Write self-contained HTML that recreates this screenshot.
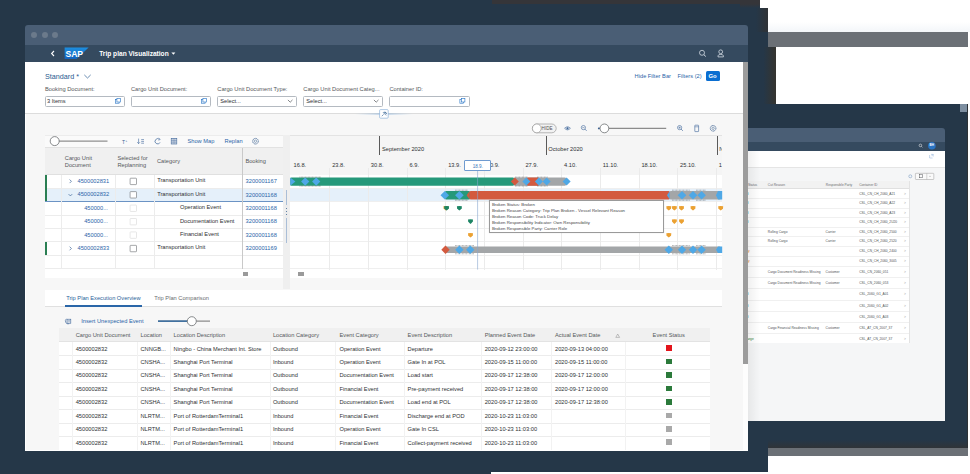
<!DOCTYPE html><html><head><meta charset="utf-8"><style>
html,body{margin:0;padding:0;}
body{width:970px;height:474px;overflow:hidden;position:relative;background:#253748;font-family:"Liberation Sans",sans-serif;}
div{position:absolute;box-sizing:border-box;}
.t{white-space:nowrap;font-size:5.7px;line-height:7px;color:#2e3134;}
.l{white-space:nowrap;font-size:5.7px;line-height:7px;color:#2a64a8;}
.h{white-space:nowrap;font-size:5.7px;line-height:7px;color:#55585b;}
svg{position:absolute;overflow:visible;}
</style></head><body>
<div style="left:760px;top:0px;width:210px;height:32px;background:#ffffff"></div>
<div style="left:760px;top:22px;width:210px;height:10px;background:linear-gradient(#fff,#f3f6f9)"></div>
<div style="left:492px;top:0px;width:268px;height:3.8px;background:#353539"></div>
<div style="left:740px;top:3.8px;width:20px;height:4px;background:linear-gradient(#353539,#253748)"></div>
<div style="left:756px;top:8px;width:12px;height:24px;background:linear-gradient(90deg,#253748,#2f3236)"></div>
<div style="left:768px;top:32px;width:200px;height:16px;background:#6b7076"></div>
<div style="left:968px;top:32px;width:2px;height:16px;background:#fff"></div>
<div style="left:758px;top:47px;width:18px;height:57px;background:linear-gradient(90deg,#253748 30%,#35342f)"></div>
<div style="left:776px;top:47px;width:194px;height:57px;background:#ffffff"></div>
<div style="left:960px;top:104px;width:8px;height:8px;background:#7d8ea0"></div>
<div style="left:968px;top:104px;width:2px;height:370px;background:#ffffff"></div>
<div style="left:768px;top:440px;width:200px;height:8px;background:linear-gradient(#253748,#303438)"></div>
<div style="left:967px;top:104px;width:1px;height:344px;background:#2d3236"></div>
<div style="left:768px;top:448px;width:200px;height:8px;background:#6b7076"></div>
<div style="left:768px;top:456px;width:202px;height:18px;background:#ffffff"></div>
<div style="left:491px;top:472px;width:277px;height:2px;background:#ffffff"></div>
<div style="left:700px;top:128px;width:245px;height:14px;background:#4a5e75;border-radius:3px 3px 0 0"></div>
<div style="left:700px;top:141.5px;width:245px;height:10px;background:#354a5f"></div>
<div style="left:700px;top:151px;width:245px;height:270px;background:#f5f6f7"></div>
<div style="left:700px;top:151px;width:245px;height:17px;background:#ffffff;border-bottom:1px solid #e5e5e5"></div>

<svg style="left:0;top:0" width="970" height="474"><circle cx="920.4" cy="145.4" r="1.3" fill="none" stroke="#fff" stroke-width="0.5"/><line x1="921.4" y1="146.4" x2="922.4" y2="147.4" stroke="#fff" stroke-width="0.5"/><circle cx="931.9" cy="145.7" r="3.8" fill="#2a74c4"/><path d="M929.6,155 V158 H932.6 M931,154.4 H933.2 V156.6 M931.4,156.2 L933.2,154.4" fill="none" stroke="#6f9bd0" stroke-width="0.4"/><circle cx="910.3" cy="176.3" r="1.5" fill="none" stroke="#6a8fb8" stroke-width="0.5"/><rect x="915.4" y="173.3" width="18.4" height="6.2" rx="0.6" fill="#fafafa" stroke="#9a9a9a" stroke-width="0.5"/><line x1="926.8" y1="173.3" x2="926.8" y2="179.5" stroke="#9a9a9a" stroke-width="0.4"/><line x1="929" y1="176.4" x2="931" y2="176.4" stroke="#777" stroke-width="0.3"/><rect x="919.6" y="174.6" width="3" height="3.2" fill="none" stroke="#32363a" stroke-width="0.4"/></svg>
<div class="t" style="left:929.5px;top:144.2px;font-size:3.1px;line-height:3.1px;color:#fff;font-weight:bold">BH</div>
<div style="left:745px;top:181.1px;width:164.5px;height:7.9px;background:#f2f2f2;border-bottom:0.4px solid #e0e0e0"></div>
<div style="left:909.2px;top:181.1px;width:0.4px;height:162px;background:#e3e3e3"></div>
<div class="t" style="left:748px;top:183.2px;font-size:3.25px;line-height:4px;color:#6a6d70">Status</div>
<div class="t" style="left:767.8px;top:183.2px;font-size:3.25px;line-height:4px;color:#6a6d70">Cut Reason</div>
<div class="t" style="left:825.8px;top:183.2px;font-size:3.25px;line-height:4px;color:#6a6d70">Responsible Party</div>
<div class="t" style="left:859.2px;top:183.2px;font-size:3.25px;line-height:4px;color:#6a6d70">Container ID</div>
<div style="left:745px;top:189px;width:164px;height:154.3px;background:#fff"></div>
<div style="left:745px;top:198.35000000000002px;width:164px;height:0.4px;background:#f0f0f0"></div>
<div style="left:745px;top:207.85000000000002px;width:164px;height:0.4px;background:#f0f0f0"></div>
<div style="left:745px;top:217.35000000000002px;width:164px;height:0.4px;background:#f0f0f0"></div>
<div style="left:745px;top:226.85000000000002px;width:164px;height:0.4px;background:#f0f0f0"></div>
<div style="left:745px;top:236.35000000000002px;width:164px;height:0.4px;background:#f0f0f0"></div>
<div style="left:745px;top:246.0px;width:164px;height:0.4px;background:#f0f0f0"></div>
<div style="left:745px;top:255.8px;width:164px;height:0.4px;background:#f0f0f0"></div>
<div style="left:745px;top:266.05px;width:164px;height:0.4px;background:#f0f0f0"></div>
<div style="left:745px;top:277.1px;width:164px;height:0.4px;background:#f0f0f0"></div>
<div style="left:745px;top:288.45px;width:164px;height:0.4px;background:#f0f0f0"></div>
<div style="left:745px;top:299.8px;width:164px;height:0.4px;background:#f0f0f0"></div>
<div style="left:745px;top:311.09999999999997px;width:164px;height:0.4px;background:#f0f0f0"></div>
<div style="left:745px;top:322.34999999999997px;width:164px;height:0.4px;background:#f0f0f0"></div>
<div style="left:745px;top:333.25px;width:164px;height:0.4px;background:#f0f0f0"></div>
<div class="t" style="left:859.2px;top:191.8px;font-size:3.25px;line-height:4px;color:#505356">CSL_CN_CH_2060_A21</div>
<div class="t" style="left:904px;top:191.8px;font-size:3.25px;line-height:4px;color:#999">&gt;</div>
<div class="t" style="left:746.6px;top:191.8px;font-size:3.25px;line-height:4px;color:#2b7d2b">d</div>
<div class="t" style="left:859.2px;top:201.3px;font-size:3.25px;line-height:4px;color:#505356">CSL_CN_CH_2060_A22</div>
<div class="t" style="left:904px;top:201.3px;font-size:3.25px;line-height:4px;color:#999">&gt;</div>
<div class="t" style="left:746.6px;top:201.3px;font-size:3.25px;line-height:4px;color:#2b7d2b">d</div>
<div class="t" style="left:859.2px;top:210.8px;font-size:3.25px;line-height:4px;color:#505356">CSL_CN_CH_2060_A23</div>
<div class="t" style="left:904px;top:210.8px;font-size:3.25px;line-height:4px;color:#999">&gt;</div>
<div class="t" style="left:746.6px;top:210.8px;font-size:3.25px;line-height:4px;color:#2b7d2b">d</div>
<div class="t" style="left:859.2px;top:220.3px;font-size:3.25px;line-height:4px;color:#505356">CSL_CN_CH_2060_2U20</div>
<div class="t" style="left:904px;top:220.3px;font-size:3.25px;line-height:4px;color:#999">&gt;</div>
<div class="t" style="left:746.6px;top:220.3px;font-size:3.25px;line-height:4px;color:#2b7d2b">d</div>
<div class="t" style="left:859.2px;top:229.8px;font-size:3.25px;line-height:4px;color:#505356">CSL_CN_CH_2060_2500</div>
<div class="t" style="left:904px;top:229.8px;font-size:3.25px;line-height:4px;color:#999">&gt;</div>
<div class="t" style="left:767.8px;top:229.8px;font-size:3.25px;line-height:4px;color:#505356">Rolling Cargo</div>
<div class="t" style="left:825.6px;top:229.8px;font-size:3.25px;line-height:4px;color:#505356">Carrier</div>
<div class="t" style="left:859.2px;top:239.3px;font-size:3.25px;line-height:4px;color:#505356">CSL_CN_CH_2060_2520</div>
<div class="t" style="left:904px;top:239.3px;font-size:3.25px;line-height:4px;color:#999">&gt;</div>
<div class="t" style="left:767.8px;top:239.3px;font-size:3.25px;line-height:4px;color:#505356">Rolling Cargo</div>
<div class="t" style="left:825.6px;top:239.3px;font-size:3.25px;line-height:4px;color:#505356">Carrier</div>
<div class="t" style="left:859.2px;top:249.1px;font-size:3.25px;line-height:4px;color:#505356">CSL_CN_CH_2060_2400</div>
<div class="t" style="left:904px;top:249.1px;font-size:3.25px;line-height:4px;color:#999">&gt;</div>
<div class="t" style="left:745.4px;top:249.1px;font-size:3.25px;line-height:4px;color:#e07b1a">tify</div>
<div class="t" style="left:859.2px;top:258.9px;font-size:3.25px;line-height:4px;color:#505356">CSL_CN_CH_2060_3005</div>
<div class="t" style="left:904px;top:258.9px;font-size:3.25px;line-height:4px;color:#999">&gt;</div>
<div class="t" style="left:745.4px;top:258.9px;font-size:3.25px;line-height:4px;color:#e07b1a">tify</div>
<div class="t" style="left:859.2px;top:269.6px;font-size:3.25px;line-height:4px;color:#505356">CSL_CN_2060_051</div>
<div class="t" style="left:904px;top:269.6px;font-size:3.25px;line-height:4px;color:#999">&gt;</div>
<div class="t" style="left:767.8px;top:269.6px;font-size:3.25px;line-height:4px;color:#505356">Cargo Document Readiness Missing</div>
<div class="t" style="left:825.6px;top:269.6px;font-size:3.25px;line-height:4px;color:#505356">Customer</div>
<div class="t" style="left:859.2px;top:281px;font-size:3.25px;line-height:4px;color:#505356">CSL_CN_2060_053</div>
<div class="t" style="left:904px;top:281px;font-size:3.25px;line-height:4px;color:#999">&gt;</div>
<div class="t" style="left:767.8px;top:281px;font-size:3.25px;line-height:4px;color:#505356">Cargo Document Readiness Missing</div>
<div class="t" style="left:825.6px;top:281px;font-size:3.25px;line-height:4px;color:#505356">Customer</div>
<div class="t" style="left:859.2px;top:292.3px;font-size:3.25px;line-height:4px;color:#505356">CSL_2060_G1_A01</div>
<div class="t" style="left:904px;top:292.3px;font-size:3.25px;line-height:4px;color:#999">&gt;</div>
<div class="t" style="left:746.6px;top:292.3px;font-size:3.25px;line-height:4px;color:#2b7d2b">d</div>
<div class="t" style="left:859.2px;top:303.7px;font-size:3.25px;line-height:4px;color:#505356">CSL_2060_G1_A02</div>
<div class="t" style="left:904px;top:303.7px;font-size:3.25px;line-height:4px;color:#999">&gt;</div>
<div class="t" style="left:746.6px;top:303.7px;font-size:3.25px;line-height:4px;color:#2b7d2b">d</div>
<div class="t" style="left:859.2px;top:314.9px;font-size:3.25px;line-height:4px;color:#505356">CSL_2060_G1_A03</div>
<div class="t" style="left:904px;top:314.9px;font-size:3.25px;line-height:4px;color:#999">&gt;</div>
<div class="t" style="left:746.6px;top:314.9px;font-size:3.25px;line-height:4px;color:#2b7d2b">d</div>
<div class="t" style="left:859.2px;top:326.2px;font-size:3.25px;line-height:4px;color:#505356">CSL_AT_CN_2007_37</div>
<div class="t" style="left:904px;top:326.2px;font-size:3.25px;line-height:4px;color:#999">&gt;</div>
<div class="t" style="left:767.8px;top:326.2px;font-size:3.25px;line-height:4px;color:#505356">Cargo Financial Readiness Missing</div>
<div class="t" style="left:825.6px;top:326.2px;font-size:3.25px;line-height:4px;color:#505356">Customer</div>
<div class="t" style="left:859.2px;top:336.7px;font-size:3.25px;line-height:4px;color:#505356">CSL_AT_CN_2007_37</div>
<div class="t" style="left:904px;top:336.7px;font-size:3.25px;line-height:4px;color:#999">&gt;</div>
<div class="t" style="left:745.4px;top:336.7px;font-size:3.25px;line-height:4px;color:#2b7d2b">harge</div>
<div style="left:748px;top:151px;width:12px;height:270px;background:linear-gradient(90deg,rgba(0,0,0,0.06),rgba(0,0,0,0))"></div>
<div style="left:25px;top:25px;width:723px;height:20px;background:#4a5e75;border-radius:3px 3px 0 0"></div>
<div style="left:31px;top:32px;width:6px;height:6px;background:#6b7a8b;border-radius:50%"></div>
<div style="left:41.6px;top:32px;width:6px;height:6px;background:#6b7a8b;border-radius:50%"></div>
<div style="left:52px;top:32px;width:6px;height:6px;background:#6b7a8b;border-radius:50%"></div>
<div style="left:25px;top:45px;width:723px;height:17.3px;background:#354a5f"></div>
<div style="left:25px;top:62px;width:723px;height:389px;background:#f7f7f7;border-left:0.8px solid #fff;border-bottom:0.8px solid #fff"></div>
<div style="left:25px;top:62.3px;width:718px;height:51.9px;background:#ffffff;border-bottom:0.8px solid #dcdcdc"></div>
<div style="left:743px;top:62.3px;width:5px;height:302px;background:#9c9c9c"></div>
<div style="left:743px;top:364.3px;width:5px;height:86.7px;background:#fdfdfd"></div>
<svg style="left:0;top:0" width="970" height="474"><polyline points="54,51 51.6,53.5 54,56" fill="none" stroke="#fff" stroke-width="1.1"/><defs><linearGradient id="sapg" x1="0" y1="0" x2="0" y2="1"><stop offset="0" stop-color="#1d8fe0"/><stop offset="1" stop-color="#1463bf"/></linearGradient></defs><polygon points="64.6,47.4 88.6,47.4 76.6,59 64.6,59" fill="url(#sapg)"/><polygon points="171.4,52.4 175.4,52.4 173.4,54.8" fill="#fff"/><circle cx="702" cy="52.8" r="2.5" fill="none" stroke="#d4dce4" stroke-width="0.8"/><line x1="703.9" y1="54.7" x2="705.8" y2="56.5" stroke="#d4dce4" stroke-width="1"/><circle cx="720.7" cy="51.8" r="1.9" fill="none" stroke="#d4dce4" stroke-width="0.8"/><path d="M718,56.9 V55.8 Q718.3,54.4 720.7,54.4 Q723.1,54.4 723.4,55.8 V56.9 Z" fill="none" stroke="#d4dce4" stroke-width="0.8"/></svg>
<div class="t" style="left:65.6px;top:49.2px;font-size:8.6px;line-height:10px;font-weight:bold;color:#fff;letter-spacing:-0.2px">SAP</div>
<div class="t" style="left:99.2px;top:49.6px;font-size:6.6px;line-height:8px;font-weight:bold;color:#fff">Trip plan Visualization</div>
<div class="t" style="left:45px;top:71.6px;font-size:7.2px;line-height:9px;color:#2a5a8f">Standard *</div>
<svg style="left:0;top:0" width="970" height="474"><polyline points="84.3,74.9 87.5,78 90.7,74.9" fill="none" stroke="#2a5a8f" stroke-width="0.7"/></svg>
<div class="h" style="left:45px;top:85.8px;">Booking Document:</div>
<div class="h" style="left:131px;top:85.8px;">Cargo Unit Document:</div>
<div class="h" style="left:217.3px;top:85.8px;">Cargo Unit Document Type:</div>
<div class="h" style="left:303.3px;top:85.8px;">Cargo Unit Document Categ...</div>
<div class="h" style="left:389.4px;top:85.8px;">Container ID:</div>
<div style="left:44.6px;top:95.8px;width:80.6px;height:10.8px;background:#fff;border:0.6px solid #b4bac1;border-radius:1.5px"></div>
<div style="left:130.6px;top:95.8px;width:80.6px;height:10.8px;background:#fff;border:0.6px solid #b4bac1;border-radius:1.5px"></div>
<div style="left:216.9px;top:95.8px;width:80.6px;height:10.8px;background:#fff;border:0.6px solid #b4bac1;border-radius:1.5px"></div>
<div style="left:302.90000000000003px;top:95.8px;width:80.6px;height:10.8px;background:#fff;border:0.6px solid #b4bac1;border-radius:1.5px"></div>
<div style="left:389.0px;top:95.8px;width:80.6px;height:10.8px;background:#fff;border:0.6px solid #b4bac1;border-radius:1.5px"></div>
<div class="t" style="left:47px;top:97.7px;">3 Items</div>
<div class="t" style="left:220.3px;top:97.7px;">Select...</div>
<div class="t" style="left:306.3px;top:97.7px;">Select...</div>
<svg style="left:0;top:0" width="970" height="474"><rect x="115.50000000000001" y="99.6" width="3.6" height="3.6" fill="none" stroke="#1f6fc4" stroke-width="0.6"/><rect x="116.9" y="98.4" width="3.6" height="3.6" fill="#fff" stroke="#1f6fc4" stroke-width="0.6"/><rect x="201.5" y="99.6" width="3.6" height="3.6" fill="none" stroke="#1f6fc4" stroke-width="0.6"/><rect x="202.9" y="98.4" width="3.6" height="3.6" fill="#fff" stroke="#1f6fc4" stroke-width="0.6"/><polyline points="287.90000000000003,99.9 290.20000000000005,102.2 292.5,99.9" fill="none" stroke="#32363a" stroke-width="0.6"/><polyline points="373.90000000000003,99.9 376.20000000000005,102.2 378.5,99.9" fill="none" stroke="#32363a" stroke-width="0.6"/><rect x="459.9" y="99.6" width="3.6" height="3.6" fill="none" stroke="#1f6fc4" stroke-width="0.6"/><rect x="461.3" y="98.4" width="3.6" height="3.6" fill="#fff" stroke="#1f6fc4" stroke-width="0.6"/></svg>
<svg style="left:0;top:0" width="970" height="474"><defs><linearGradient id="pinl" x1="0" x2="1"><stop offset="0" stop-color="#8fb6dc" stop-opacity="0"/><stop offset="0.5" stop-color="#6c9fd3"/><stop offset="1" stop-color="#8fb6dc" stop-opacity="0"/></linearGradient></defs><rect x="355" y="113.6" width="58" height="0.8" fill="url(#pinl)"/><rect x="379.6" y="109.6" width="8.6" height="8.6" fill="#fff" stroke="#7aa6d4" stroke-width="0.6" rx="1"/><line x1="381.8" y1="116.2" x2="383.6" y2="114.4" stroke="#2a5a8f" stroke-width="0.6"/><path d="M383,112.2 L386.2,115.4 M384.4,111.6 L386.8,114 M383.6,112.8 L385.8,112.2 L386.2,114.2" stroke="#2a5a8f" stroke-width="0.6" fill="none"/></svg>
<div class="l" style="left:634.6px;top:73px;">Hide Filter Bar</div>
<div class="l" style="left:677.6px;top:73px;">Filters (2)</div>
<div style="left:705.5px;top:70.5px;width:14.3px;height:10.7px;background:#0a6ed1;border-radius:1.5px"></div>
<div class="t" style="left:708.5px;top:72.8px;color:#fff;font-weight:bold;font-size:5.9px">Go</div>
<div style="left:45px;top:135px;width:238px;height:13.2px;background:#fafafa;border-top:0.6px solid #ececec;border-bottom:0.6px solid #e2e2e2"></div>
<svg style="left:0;top:0" width="970" height="474"><line x1="59" y1="141.2" x2="107.5" y2="141.2" stroke="#8f8f8f" stroke-width="1.3"/><circle cx="54.7" cy="141.1" r="4.5" fill="#fff" stroke="#6a6d70" stroke-width="0.8"/><text x="122" y="143.6" font-size="5" fill="#3a6398" font-family="Liberation Sans">T</text><text x="125.5" y="141.6" font-size="3" fill="#3a6398" font-family="Liberation Sans">+</text><path d="M138.6,138.6 V143.6 M137.2,142.2 L138.6,143.6 L140,142.2 M141.2,139.6 H144 M141.2,141.4 H144 M141.2,143.2 H144" stroke="#3a6398" stroke-width="0.6" fill="none"/><path d="M159.4,139.4 A2.6,2.6 0 1 0 160,142.4" stroke="#3a6398" stroke-width="0.7" fill="none"/><path d="M158.6,138.2 L160.2,139.2 L158.8,140.6" stroke="#3a6398" stroke-width="0.6" fill="none"/><rect x="171.2" y="138.4" width="5.6" height="5.6" fill="none" stroke="#3a6398" stroke-width="0.6"/><path d="M171.2,140.3 H176.8 M171.2,142.1 H176.8 M173.1,138.4 V144 M174.9,138.4 V144" stroke="#3a6398" stroke-width="0.5"/><circle cx="255.5" cy="141.2" r="2.8" fill="none" stroke="#5878a0" stroke-width="0.95" stroke-dasharray="1.3 0.35"/><circle cx="255.5" cy="141.2" r="1.176" fill="none" stroke="#5878a0" stroke-width="0.6"/></svg>
<div class="l" style="left:187.5px;top:137.8px;">Show Map</div>
<div class="l" style="left:224.6px;top:137.8px;">Replan</div>
<div style="left:45px;top:148px;width:238px;height:26.6px;background:#f0f0f0;border-bottom:0.6px solid #e0e0e0"></div>
<div class="h" style="left:64.8px;top:154.6px;">Cargo Unit</div>
<div class="h" style="left:64.8px;top:161.5px;">Document</div>
<div class="h" style="left:117.4px;top:154.6px;">Selected for</div>
<div class="h" style="left:117.4px;top:161.5px;">Replanning</div>
<div class="h" style="left:157px;top:158.1px;">Category</div>
<div class="h" style="left:245.4px;top:158.1px;">Booking</div>
<div style="left:45px;top:174.6px;width:238px;height:103px;background:#fff"></div>
<div style="left:45px;top:188.03px;width:238px;height:13.43px;background:#e5f0fa"></div>
<div style="left:45px;top:187.73px;width:238px;height:0.6px;background:#ececec"></div>
<div style="left:45px;top:201.15999999999997px;width:238px;height:0.6px;background:#6b93c4"></div>
<div style="left:45px;top:214.58999999999997px;width:238px;height:0.6px;background:#ececec"></div>
<div style="left:45px;top:228.01999999999998px;width:238px;height:0.6px;background:#ececec"></div>
<div style="left:45px;top:241.45px;width:238px;height:0.6px;background:#ececec"></div>
<div style="left:45px;top:254.88px;width:238px;height:0.6px;background:#ececec"></div>
<div style="left:45px;top:268.31px;width:238px;height:0.6px;background:#ececec"></div>
<div style="left:61px;top:174.6px;width:0.6px;height:94.6px;background:#ececec"></div>
<div style="left:114.5px;top:174.6px;width:0.6px;height:94.6px;background:#ececec"></div>
<div style="left:154px;top:174.6px;width:0.6px;height:94.6px;background:#ececec"></div>
<div style="left:242.2px;top:148px;width:0.9px;height:121.2px;background:#c9c9c9"></div>
<div style="left:282.6px;top:148px;width:0.6px;height:130px;background:#e5e5e5"></div>
<div style="left:45px;top:174.6px;width:2.4px;height:13.43px;background:#2a7f53"></div>
<div style="left:45px;top:188.03px;width:2.4px;height:13.43px;background:#2a7f53"></div>
<div style="left:45px;top:241.75px;width:2.4px;height:13.43px;background:#2a7f53"></div>
<div class="l" style="left:77.5px;top:177.79999999999998px;">4500002831</div>
<div class="t" style="left:157.2px;top:177.29999999999998px;">Transportation Unit</div>
<div class="l" style="left:245.6px;top:178.1px;">3200001167</div>
<div class="l" style="left:77.5px;top:191.23px;">4500002832</div>
<div class="t" style="left:157.2px;top:190.73px;">Transportation Unit</div>
<div class="l" style="left:245.6px;top:191.53px;">3200001168</div>
<div class="l" style="left:84.2px;top:204.65999999999997px;">450000...</div>
<div class="t" style="left:180px;top:204.15999999999997px;">Operation Event</div>
<div class="l" style="left:245.6px;top:204.95999999999998px;">3200001168</div>
<div class="l" style="left:84.2px;top:218.08999999999997px;">450000...</div>
<div class="t" style="left:180px;top:217.58999999999997px;">Documentation Event</div>
<div class="l" style="left:245.6px;top:218.39px;">3200001168</div>
<div class="l" style="left:84.2px;top:231.51999999999998px;">450000...</div>
<div class="t" style="left:180px;top:231.01999999999998px;">Financial Event</div>
<div class="l" style="left:245.6px;top:231.82px;">3200001168</div>
<div class="l" style="left:77.5px;top:244.95px;">4500002833</div>
<div class="t" style="left:157.2px;top:244.45px;">Transportation Unit</div>
<div class="l" style="left:245.6px;top:245.25px;">3200001169</div>
<svg style="left:0;top:0" width="970" height="474"><polyline points="69.6,179.49999999999997 71.4,181.29999999999998 69.6,183.1" fill="none" stroke="#3a6398" stroke-width="0.7"/><rect x="130.1" y="178.2" width="6.4" height="6.4" rx="0.6" fill="#fff" stroke="#6a6d70" stroke-width="0.6"/><polyline points="68.6,194.13 70.4,195.92999999999998 72.2,194.13" fill="none" stroke="#3a6398" stroke-width="0.7"/><rect x="130.1" y="191.63" width="6.4" height="6.4" rx="0.6" fill="#fff" stroke="#6a6d70" stroke-width="0.6"/><rect x="130.1" y="205.05999999999997" width="6.4" height="6.4" rx="0.6" fill="#fff" stroke="#d6d6d6" stroke-width="0.6"/><rect x="130.1" y="218.48999999999998" width="6.4" height="6.4" rx="0.6" fill="#fff" stroke="#d6d6d6" stroke-width="0.6"/><rect x="130.1" y="231.92" width="6.4" height="6.4" rx="0.6" fill="#fff" stroke="#d6d6d6" stroke-width="0.6"/><polyline points="69.6,246.64999999999998 71.4,248.45 69.6,250.25" fill="none" stroke="#3a6398" stroke-width="0.7"/><rect x="130.1" y="245.35" width="6.4" height="6.4" rx="0.6" fill="#fff" stroke="#6a6d70" stroke-width="0.6"/></svg>
<div style="left:242.5px;top:271.8px;width:5.2px;height:4.4px;background:#9a9a9a"></div>
<div style="left:283px;top:135px;width:6.6px;height:154px;background:#efefef"></div>
<svg style="left:0;top:0" width="970" height="474"><line x1="286.5" y1="190" x2="286.5" y2="243" stroke="#7a9cc6" stroke-width="0.6"/><rect x="285.2" y="205" width="2.6" height="13" fill="#ececec"/><circle cx="286.5" cy="208.6" r="0.5" fill="#345f8f"/><circle cx="286.5" cy="211.6" r="0.5" fill="#345f8f"/><circle cx="286.5" cy="214.6" r="0.5" fill="#345f8f"/></svg>
<div style="left:289.7px;top:135px;width:432.50000000000006px;height:40px;background:#f5f5f5;border-top:0.6px solid #e3e3e3"></div>
<div style="left:289.7px;top:174.6px;width:432.50000000000006px;height:103px;background:#fff"></div>
<div style="left:289.7px;top:188.03px;width:432.50000000000006px;height:13.43px;background:#e5f0fa"></div>
<div style="left:289.7px;top:187.73px;width:432.50000000000006px;height:0.6px;background:#efefef"></div>
<div style="left:289.7px;top:201.15999999999997px;width:432.50000000000006px;height:0.6px;background:#efefef"></div>
<div style="left:289.7px;top:214.58999999999997px;width:432.50000000000006px;height:0.6px;background:#efefef"></div>
<div style="left:289.7px;top:228.01999999999998px;width:432.50000000000006px;height:0.6px;background:#efefef"></div>
<div style="left:289.7px;top:241.45px;width:432.50000000000006px;height:0.6px;background:#efefef"></div>
<div style="left:289.7px;top:254.88px;width:432.50000000000006px;height:0.6px;background:#efefef"></div>
<div style="left:289.7px;top:268.31px;width:432.50000000000006px;height:0.6px;background:#efefef"></div>
<div style="left:329.36px;top:168px;width:0.6px;height:101.6px;background:#ebebeb"></div>
<div style="left:368.02px;top:168px;width:0.6px;height:101.6px;background:#ebebeb"></div>
<div style="left:406.67999999999995px;top:168px;width:0.6px;height:101.6px;background:#ebebeb"></div>
<div style="left:445.34px;top:168px;width:0.6px;height:101.6px;background:#ebebeb"></div>
<div style="left:484.0px;top:168px;width:0.6px;height:101.6px;background:#ebebeb"></div>
<div style="left:522.66px;top:168px;width:0.6px;height:101.6px;background:#ebebeb"></div>
<div style="left:561.3199999999999px;top:168px;width:0.6px;height:101.6px;background:#ebebeb"></div>
<div style="left:599.98px;top:168px;width:0.6px;height:101.6px;background:#ebebeb"></div>
<div style="left:638.6399999999999px;top:168px;width:0.6px;height:101.6px;background:#ebebeb"></div>
<div style="left:677.3px;top:168px;width:0.6px;height:101.6px;background:#ebebeb"></div>
<div style="left:715.96px;top:168px;width:0.6px;height:101.6px;background:#ebebeb"></div>
<div class="t" style="left:293.5px;top:162.2px;">16.8.</div>
<div class="t" style="left:332.16px;top:162.2px;">23.8.</div>
<div class="t" style="left:370.82px;top:162.2px;">30.8.</div>
<div class="t" style="left:409.47999999999996px;top:162.2px;">6.9.</div>
<div class="t" style="left:448.14px;top:162.2px;">13.9.</div>
<div class="t" style="left:486.8px;top:162.2px;">20.9.</div>
<div class="t" style="left:525.4599999999999px;top:162.2px;">27.9.</div>
<div class="t" style="left:564.1199999999999px;top:162.2px;">4.10.</div>
<div class="t" style="left:602.78px;top:162.2px;">11.10.</div>
<div class="t" style="left:641.4399999999998px;top:162.2px;">18.10.</div>
<div class="t" style="left:680.0999999999999px;top:162.2px;">25.10.</div>
<div class="t" style="left:718.76px;top:162.2px;">1.11.</div>
<div style="left:379.3px;top:135.5px;width:0.5px;height:19.5px;background:#5a5a5a"></div>
<div class="t" style="left:382.0px;top:145.8px;">September 2020</div>
<div style="left:545.6px;top:135.5px;width:0.5px;height:19.5px;background:#5a5a5a"></div>
<div class="t" style="left:548.3000000000001px;top:145.8px;">October 2020</div>
<div style="left:716.5px;top:135.5px;width:0.5px;height:19.5px;background:#5a5a5a"></div>
<div class="t" style="left:719.2px;top:145.8px;">N</div>
<div style="left:722.2px;top:135px;width:21px;height:154px;background:#f7f7f7"></div>
<div style="left:290px;top:271.8px;width:0px;height:0px;"></div>
<div style="left:297.8px;top:272px;width:6.2px;height:4.3px;background:#9a9a9a"></div>
<svg style="left:0;top:0" width="970" height="474"><rect x="290.3" y="177.4" width="223.7" height="8.299999999999983" rx="1.2" fill="#26997a"/><rect x="514" y="177.4" width="52" height="8.299999999999983" rx="1.2" fill="#a3a6a8"/><rect x="527" y="177.4" width="12" height="8.299999999999983" rx="1.2" fill="#d35a3f"/><path d="M299.5,177.1 H321 M299.5,186.0 H321" fill="none" stroke="#444" stroke-width="0.5" stroke-dasharray="0.8 0.6"/><polygon points="290.3,177.4 295.4,181.55 290.3,185.7" fill="#4fa8e6"/><polygon points="301.09999999999997,181.55 305.2,177.45000000000002 309.3,181.55 305.2,185.65" fill="#4fa8e6"/><polygon points="312.09999999999997,181.55 316.2,177.45000000000002 320.3,181.55 316.2,185.65" fill="#4fa8e6"/><polygon points="510.79999999999995,181.55 514.8,177.55 518.8,181.55 514.8,185.55" fill="#d35a3f"/><path d="M515,177.1 H528 M515,186.0 H528" fill="none" stroke="#444" stroke-width="0.5" stroke-dasharray="0.8 0.6"/><path d="M537,177.1 H548 M537,186.0 H548" fill="none" stroke="#444" stroke-width="0.5" stroke-dasharray="0.8 0.6"/><polygon points="522.4,181.55 526.4,177.55 530.4,181.55 526.4,185.55" fill="#4fa8e6"/><polygon points="534.8,181.55 538.8,177.55 542.8,181.55 538.8,185.55" fill="#4fa8e6"/><polygon points="542.6,181.55 546.6,177.55 550.6,181.55 546.6,185.55" fill="#4fa8e6"/><polygon points="562.6,181.55 566.6,177.55 570.6,181.55 566.6,185.55" fill="#4fa8e6"/><rect x="445" y="191" width="25" height="8.400000000000006" rx="1.2" fill="#26997a"/><rect x="469.6" y="191" width="200.10000000000002" height="8.400000000000006" rx="1.2" fill="#d35a3f"/><rect x="669.7" y="191" width="51.0" height="8.400000000000006" rx="1.2" fill="#a3a6a8"/><path d="M455,190.2 H468 M455,200.20000000000002 H468" fill="none" stroke="#444" stroke-width="0.5" stroke-dasharray="0.8 0.6"/><polygon points="440.5,195.2 444.8,190.89999999999998 449.1,195.2 444.8,199.5" fill="#4fa8e6"/><polygon points="455.09999999999997,195.2 459.4,190.89999999999998 463.7,195.2 459.4,199.5" fill="#4fa8e6"/><polygon points="469.6,191 466.6,195.2 469.6,199.4" fill="#d35a3f"/><path d="M672,190.2 H690 M672,200.20000000000002 H690" fill="none" stroke="#444" stroke-width="0.5" stroke-dasharray="0.8 0.6"/><path d="M696,190.2 H706 M696,200.20000000000002 H706" fill="none" stroke="#444" stroke-width="0.5" stroke-dasharray="0.8 0.6"/><polygon points="669.7,191 667,195.2 669.7,199.4" fill="#4fa8e6"/><polygon points="677.7,195.2 682,190.89999999999998 686.3,195.2 682,199.5" fill="#4fa8e6"/><polygon points="688.7,195.2 693,190.89999999999998 697.3,195.2 693,199.5" fill="#4fa8e6"/><polygon points="697.3000000000001,195.2 701.6,190.89999999999998 705.9,195.2 701.6,199.5" fill="#4fa8e6"/><polygon points="718,191 722.2,191 722.2,199.4 718,199.4 716,195.2" fill="#4fa8e6"/><path d="M443.40000000000003,206.2 Q445.90000000000003,205.6 448.40000000000003,206.2 L448.20000000000005,208.2 Q447.40000000000003,209.7 445.90000000000003,210.5 Q444.40000000000003,209.7 443.6,208.2 Z" fill="#eba132"/><path d="M444.1,206.2 Q446.6,205.6 449.1,206.2 L448.90000000000003,208.2 Q448.1,209.7 446.6,210.5 Q445.1,209.7 444.3,208.2 Z" fill="#1d8565"/><path d="M456.9,206.2 Q459.4,205.6 461.9,206.2 L461.7,208.2 Q460.9,209.7 459.4,210.5 Q457.9,209.7 457.09999999999997,208.2 Z" fill="#1d8565"/><path d="M666.3,206.2 Q668.8,205.6 671.3,206.2 L671.0999999999999,208.2 Q670.3,209.7 668.8,210.5 Q667.3,209.7 666.5,208.2 Z" fill="#eba132"/><path d="M671.9,206.2 Q674.4,205.6 676.9,206.2 L676.6999999999999,208.2 Q675.9,209.7 674.4,210.5 Q672.9,209.7 672.1,208.2 Z" fill="#eba132"/><path d="M679.0,206.2 Q681.5,205.6 684.0,206.2 L683.8,208.2 Q683.0,209.7 681.5,210.5 Q680.0,209.7 679.2,208.2 Z" fill="#eba132"/><path d="M690.5,206.2 Q693,205.6 695.5,206.2 L695.3,208.2 Q694.5,209.7 693,210.5 Q691.5,209.7 690.7,208.2 Z" fill="#eba132"/><path d="M718.2,206.2 Q720.7,205.6 723.2,206.2 L723.0,208.2 Q722.2,209.7 720.7,210.5 Q719.2,209.7 718.4000000000001,208.2 Z" fill="#eba132"/><path d="M468.0,219.6 Q470.5,219.0 473.0,219.6 L472.8,221.6 Q472.0,223.1 470.5,223.9 Q469.0,223.1 468.2,221.6 Z" fill="#1d8565"/><path d="M671.9,219.6 Q674.4,219.0 676.9,219.6 L676.6999999999999,221.6 Q675.9,223.1 674.4,223.9 Q672.9,223.1 672.1,221.6 Z" fill="#eba132"/><path d="M679.0,219.6 Q681.5,219.0 684.0,219.6 L683.8,221.6 Q683.0,223.1 681.5,223.9 Q680.0,223.1 679.2,221.6 Z" fill="#eba132"/><path d="M468.0,233.2 Q470.5,232.6 473.0,233.2 L472.8,235.2 Q472.0,236.7 470.5,237.5 Q469.0,236.7 468.2,235.2 Z" fill="#eba132"/><path d="M666.3,233.2 Q668.8,232.6 671.3,233.2 L671.0999999999999,235.2 Q670.3,236.7 668.8,237.5 Q667.3,236.7 666.5,235.2 Z" fill="#eba132"/><rect x="445.5" y="246.4" width="275.20000000000005" height="6.599999999999994" rx="1.2" fill="#a3a6a8"/><path d="M455,245.6 H474 M455,253.8 H474" fill="none" stroke="#444" stroke-width="0.5" stroke-dasharray="0.8 0.6"/><path d="M672,245.6 H690 M672,253.8 H690" fill="none" stroke="#444" stroke-width="0.5" stroke-dasharray="0.8 0.6"/><path d="M696,245.6 H706 M696,253.8 H706" fill="none" stroke="#444" stroke-width="0.5" stroke-dasharray="0.8 0.6"/><polygon points="441.3,249.7 445.5,245.5 449.7,249.7 445.5,253.89999999999998" fill="#d35a3f"/><polygon points="455.2,249.7 459.4,245.5 463.59999999999997,249.7 459.4,253.89999999999998" fill="#4fa8e6"/><polygon points="466.0,249.7 470.2,245.5 474.4,249.7 470.2,253.89999999999998" fill="#4fa8e6"/><polygon points="664.5999999999999,249.7 668.8,245.5 673.0,249.7 668.8,253.89999999999998" fill="#4fa8e6"/><polygon points="677.8,249.7 682,245.5 686.2,249.7 682,253.89999999999998" fill="#4fa8e6"/><polygon points="688.8,249.7 693,245.5 697.2,249.7 693,253.89999999999998" fill="#4fa8e6"/><polygon points="697.4,249.7 701.6,245.5 705.8000000000001,249.7 701.6,253.89999999999998" fill="#4fa8e6"/><polygon points="718,246.4 722.2,246.4 722.2,253 718,253 716,249.7" fill="#4fa8e6"/><line x1="477.6" y1="170.6" x2="477.6" y2="269.6" stroke="#86a6cf" stroke-width="0.6"/></svg>
<div style="left:464.2px;top:160.4px;width:27.2px;height:10.2px;background:#fff;border:0.6px solid #6f9bd0;border-radius:1px"></div>
<div class="t" style="left:472.7px;top:162.6px;font-size:4.6px;color:#3b76ba">18.9.</div>
<div style="left:488.8px;top:200px;width:175.7px;height:32.8px;background:#fff;border:0.7px solid #9a9a9a;box-shadow:0 0 1px rgba(0,0,0,0.15)"></div>
<div class="t" style="left:491.9px;top:201.6px;font-size:4.3px;line-height:6px;color:#3f4245">Broken Status: Broken</div>
<div class="t" style="left:491.9px;top:207.57999999999998px;font-size:4.3px;line-height:6px;color:#3f4245">Broken Reason Category: Trip Plan Broken - Vessel Relevant Reason</div>
<div class="t" style="left:491.9px;top:213.56px;font-size:4.3px;line-height:6px;color:#3f4245">Broken Reason Code: Truck Delay</div>
<div class="t" style="left:491.9px;top:219.54px;font-size:4.3px;line-height:6px;color:#3f4245">Broken Responsibility Indicator: Own Responsibility</div>
<div class="t" style="left:491.9px;top:225.51999999999998px;font-size:4.3px;line-height:6px;color:#3f4245">Broken Responsible Party: Carrier Role</div>
<svg style="left:0;top:0" width="970" height="474"><rect x="532.4" y="124" width="23.8" height="8.8" rx="4.4" fill="#f2f2f2" stroke="#8a8a8a" stroke-width="0.6"/><circle cx="536.8" cy="128.4" r="4.4" fill="#fff" stroke="#8a8a8a" stroke-width="0.6"/><path d="M564.6,128.3 Q567.5,125.2 570.4,128.3 Q567.5,131.4 564.6,128.3 Z" fill="none" stroke="#3a6398" stroke-width="0.6"/><circle cx="567.5" cy="128.3" r="1.1" fill="#3a6398"/><circle cx="583.4" cy="127.6" r="2.1" fill="none" stroke="#3a6398" stroke-width="0.6"/><line x1="584.9" y1="129.1" x2="586.6" y2="130.8" stroke="#3a6398" stroke-width="0.7"/><line x1="582.3" y1="127.6" x2="584.5" y2="127.6" stroke="#3a6398" stroke-width="0.5"/><line x1="598.6" y1="128.4" x2="666.2" y2="128.4" stroke="#8c8c8c" stroke-width="1.3"/><circle cx="598.8" cy="128.4" r="0.9" fill="#3a6398"/><circle cx="604.4" cy="128.4" r="4.4" fill="#fff" stroke="#6a6d70" stroke-width="0.8"/><circle cx="679.6" cy="127.6" r="2.1" fill="none" stroke="#3a6398" stroke-width="0.6"/><line x1="681.1" y1="129.1" x2="682.8" y2="130.8" stroke="#3a6398" stroke-width="0.7"/><path d="M678.5,127.6 H680.7 M679.6,126.5 V128.7" stroke="#3a6398" stroke-width="0.5"/><rect x="694.8" y="125.2" width="3.8" height="6.4" rx="0.4" fill="none" stroke="#3a6398" stroke-width="0.6"/><path d="M694.8,126.8 H698.6" stroke="#3a6398" stroke-width="0.5"/><circle cx="713.1" cy="128.3" r="2.8" fill="none" stroke="#5878a0" stroke-width="0.95" stroke-dasharray="1.3 0.35"/><circle cx="713.1" cy="128.3" r="1.176" fill="none" stroke="#5878a0" stroke-width="0.6"/></svg>
<div class="t" style="left:541.6px;top:125.2px;font-size:4.6px;color:#555">HIDE</div>
<div style="left:45px;top:289.6px;width:677.2px;height:17.6px;background:#fff;border-bottom:0.6px solid #e0e0e0"></div>
<div class="t" style="left:66.2px;top:294.6px;color:#2a5f9a">Trip Plan Execution Overview</div>
<div class="t" style="left:154.2px;top:294.6px;color:#6a6d70">Trip Plan Comparison</div>
<div style="left:64.7px;top:305.4px;width:77.1px;height:1.8px;background:#2a66a8"></div>
<svg style="left:0;top:0" width="970" height="474"><path d="M66.4,318.8 Q64.8,320.2 65.6,322.4 Q66.8,324.4 69.2,323.8" fill="none" stroke="#3a6398" stroke-width="0.6"/><rect x="67" y="319.2" width="3.8" height="4" fill="none" stroke="#3a6398" stroke-width="0.6"/><path d="M67.6,320.6 H70.2 M67.6,321.8 H70.2" stroke="#3a6398" stroke-width="0.4"/><line x1="158" y1="321.2" x2="210" y2="321.2" stroke="#8c8c8c" stroke-width="1.2"/><line x1="158" y1="321.2" x2="191.8" y2="321.2" stroke="#1f5f9e" stroke-width="1.3"/><circle cx="191.8" cy="321.2" r="4.5" fill="#fff" stroke="#6a6d70" stroke-width="0.8"/></svg>
<div class="l" style="left:81.2px;top:317.6px;">Insert Unexpected Event</div>
<div style="left:59px;top:328.2px;width:650.5px;height:14.1px;background:#f0f0f0;border-bottom:0.6px solid #e3e3e3"></div>
<div style="left:59px;top:342.3px;width:650.5px;height:108px;background:#fff"></div>
<div style="left:59px;top:355.46px;width:650.5px;height:0.6px;background:#ececec"></div>
<div style="left:59px;top:368.92px;width:650.5px;height:0.6px;background:#ececec"></div>
<div style="left:59px;top:382.38px;width:650.5px;height:0.6px;background:#ececec"></div>
<div style="left:59px;top:395.84px;width:650.5px;height:0.6px;background:#ececec"></div>
<div style="left:59px;top:409.3px;width:650.5px;height:0.6px;background:#ececec"></div>
<div style="left:59px;top:422.76px;width:650.5px;height:0.6px;background:#ececec"></div>
<div style="left:59px;top:436.21999999999997px;width:650.5px;height:0.6px;background:#ececec"></div>
<div style="left:71.5px;top:342.3px;width:0.6px;height:108px;background:#f2f2f2"></div>
<div style="left:136.9px;top:342.3px;width:0.6px;height:108px;background:#f2f2f2"></div>
<div style="left:169.5px;top:342.3px;width:0.6px;height:108px;background:#f2f2f2"></div>
<div style="left:269.7px;top:342.3px;width:0.6px;height:108px;background:#f2f2f2"></div>
<div style="left:335.4px;top:342.3px;width:0.6px;height:108px;background:#f2f2f2"></div>
<div style="left:404px;top:342.3px;width:0.6px;height:108px;background:#f2f2f2"></div>
<div style="left:480.8px;top:342.3px;width:0.6px;height:108px;background:#f2f2f2"></div>
<div style="left:551.2px;top:342.3px;width:0.6px;height:108px;background:#f2f2f2"></div>
<div style="left:624.7px;top:342.3px;width:0.6px;height:108px;background:#f2f2f2"></div>
<div class="h" style="left:75.7px;top:332.4px;">Cargo Unit Document</div>
<div class="h" style="left:140.5px;top:332.4px;">Location</div>
<div class="h" style="left:173.6px;top:332.4px;">Location Description</div>
<div class="h" style="left:272.9px;top:332.4px;">Location Category</div>
<div class="h" style="left:339.5px;top:332.4px;">Event Category</div>
<div class="h" style="left:407.6px;top:332.4px;">Event Description</div>
<div class="h" style="left:484.7px;top:332.4px;">Planned Event Date</div>
<div class="h" style="left:555px;top:332.4px;">Actual Event Date</div>
<div class="h" style="left:652.6px;top:332.4px;">Event Status</div>
<svg style="left:0;top:0" width="970" height="474"><polygon points="615.8,337.4 619.6,337.4 617.7,334" fill="none" stroke="#8a8a8a" stroke-width="0.5"/></svg>
<div class="t" style="left:75.7px;top:345.5px;">4500002832</div>
<div class="t" style="left:140.5px;top:345.5px;">CNNGB...</div>
<div class="t" style="left:173.6px;top:345.5px;">Ningbo - China Merchant Int. Store</div>
<div class="t" style="left:272.9px;top:345.5px;">Outbound</div>
<div class="t" style="left:339.5px;top:345.5px;">Operation Event</div>
<div class="t" style="left:407.6px;top:345.5px;">Departure</div>
<div class="t" style="left:484.7px;top:345.5px;">2020-09-12 23:00:00</div>
<div class="t" style="left:555px;top:345.5px;">2020-09-13 04:00:00</div>
<div style="left:665.8px;top:345.2px;width:5.8px;height:5.8px;background:#e3141b"></div>
<div class="t" style="left:75.7px;top:358.96px;">4500002832</div>
<div class="t" style="left:140.5px;top:358.96px;">CNSHA...</div>
<div class="t" style="left:173.6px;top:358.96px;">Shanghai Port Terminal</div>
<div class="t" style="left:272.9px;top:358.96px;">Inbound</div>
<div class="t" style="left:339.5px;top:358.96px;">Operation Event</div>
<div class="t" style="left:407.6px;top:358.96px;">Gate In at POL</div>
<div class="t" style="left:484.7px;top:358.96px;">2020-09-15 11:00:00</div>
<div class="t" style="left:555px;top:358.96px;">2020-09-15 11:00:00</div>
<div style="left:665.8px;top:358.65999999999997px;width:5.8px;height:5.8px;background:#2b7a3b"></div>
<div class="t" style="left:75.7px;top:372.42px;">4500002832</div>
<div class="t" style="left:140.5px;top:372.42px;">CNSHA...</div>
<div class="t" style="left:173.6px;top:372.42px;">Shanghai Port Terminal</div>
<div class="t" style="left:272.9px;top:372.42px;">Outbound</div>
<div class="t" style="left:339.5px;top:372.42px;">Documentation Event</div>
<div class="t" style="left:407.6px;top:372.42px;">Load start</div>
<div class="t" style="left:484.7px;top:372.42px;">2020-09-17 12:38:00</div>
<div class="t" style="left:555px;top:372.42px;">2020-09-17 12:00:00</div>
<div style="left:665.8px;top:372.12px;width:5.8px;height:5.8px;background:#2b7a3b"></div>
<div class="t" style="left:75.7px;top:385.88px;">4500002832</div>
<div class="t" style="left:140.5px;top:385.88px;">CNSHA...</div>
<div class="t" style="left:173.6px;top:385.88px;">Shanghai Port Terminal</div>
<div class="t" style="left:272.9px;top:385.88px;">Outbound</div>
<div class="t" style="left:339.5px;top:385.88px;">Financial Event</div>
<div class="t" style="left:407.6px;top:385.88px;">Pre-payment received</div>
<div class="t" style="left:484.7px;top:385.88px;">2020-09-17 12:38:00</div>
<div class="t" style="left:555px;top:385.88px;">2020-09-17 12:00:00</div>
<div style="left:665.8px;top:385.58px;width:5.8px;height:5.8px;background:#2b7a3b"></div>
<div class="t" style="left:75.7px;top:399.34px;">4500002832</div>
<div class="t" style="left:140.5px;top:399.34px;">CNSHA...</div>
<div class="t" style="left:173.6px;top:399.34px;">Shanghai Port Terminal</div>
<div class="t" style="left:272.9px;top:399.34px;">Outbound</div>
<div class="t" style="left:339.5px;top:399.34px;">Documentation Event</div>
<div class="t" style="left:407.6px;top:399.34px;">Load end at POL</div>
<div class="t" style="left:484.7px;top:399.34px;">2020-09-17 12:38:00</div>
<div class="t" style="left:555px;top:399.34px;">2020-09-17 12:38:00</div>
<div style="left:665.8px;top:399.03999999999996px;width:5.8px;height:5.8px;background:#2b7a3b"></div>
<div class="t" style="left:75.7px;top:412.8px;">4500002832</div>
<div class="t" style="left:140.5px;top:412.8px;">NLRTM...</div>
<div class="t" style="left:173.6px;top:412.8px;">Port of RotterdamTerminal1</div>
<div class="t" style="left:272.9px;top:412.8px;">Inbound</div>
<div class="t" style="left:339.5px;top:412.8px;">Financial Event</div>
<div class="t" style="left:407.6px;top:412.8px;">Discharge end at POD</div>
<div class="t" style="left:484.7px;top:412.8px;">2020-10-23 11:03:00</div>
<div style="left:665.8px;top:412.5px;width:5.8px;height:5.8px;background:#a9a9a9"></div>
<div class="t" style="left:75.7px;top:426.26px;">4500002832</div>
<div class="t" style="left:140.5px;top:426.26px;">NLRTM...</div>
<div class="t" style="left:173.6px;top:426.26px;">Port of RotterdamTerminal1</div>
<div class="t" style="left:272.9px;top:426.26px;">Inbound</div>
<div class="t" style="left:339.5px;top:426.26px;">Operation Event</div>
<div class="t" style="left:407.6px;top:426.26px;">Gate In CSL</div>
<div class="t" style="left:484.7px;top:426.26px;">2020-10-23 11:03:00</div>
<div style="left:665.8px;top:425.96px;width:5.8px;height:5.8px;background:#a9a9a9"></div>
<div class="t" style="left:75.7px;top:439.71999999999997px;">4500002832</div>
<div class="t" style="left:140.5px;top:439.71999999999997px;">NLRTM...</div>
<div class="t" style="left:173.6px;top:439.71999999999997px;">Port of RotterdamTerminal1</div>
<div class="t" style="left:272.9px;top:439.71999999999997px;">Inbound</div>
<div class="t" style="left:339.5px;top:439.71999999999997px;">Financial Event</div>
<div class="t" style="left:407.6px;top:439.71999999999997px;">Collect-payment received</div>
<div class="t" style="left:484.7px;top:439.71999999999997px;">2020-10-23 11:03:00</div>
<div style="left:665.8px;top:439.41999999999996px;width:5.8px;height:5.8px;background:#a9a9a9"></div>
</body></html>
